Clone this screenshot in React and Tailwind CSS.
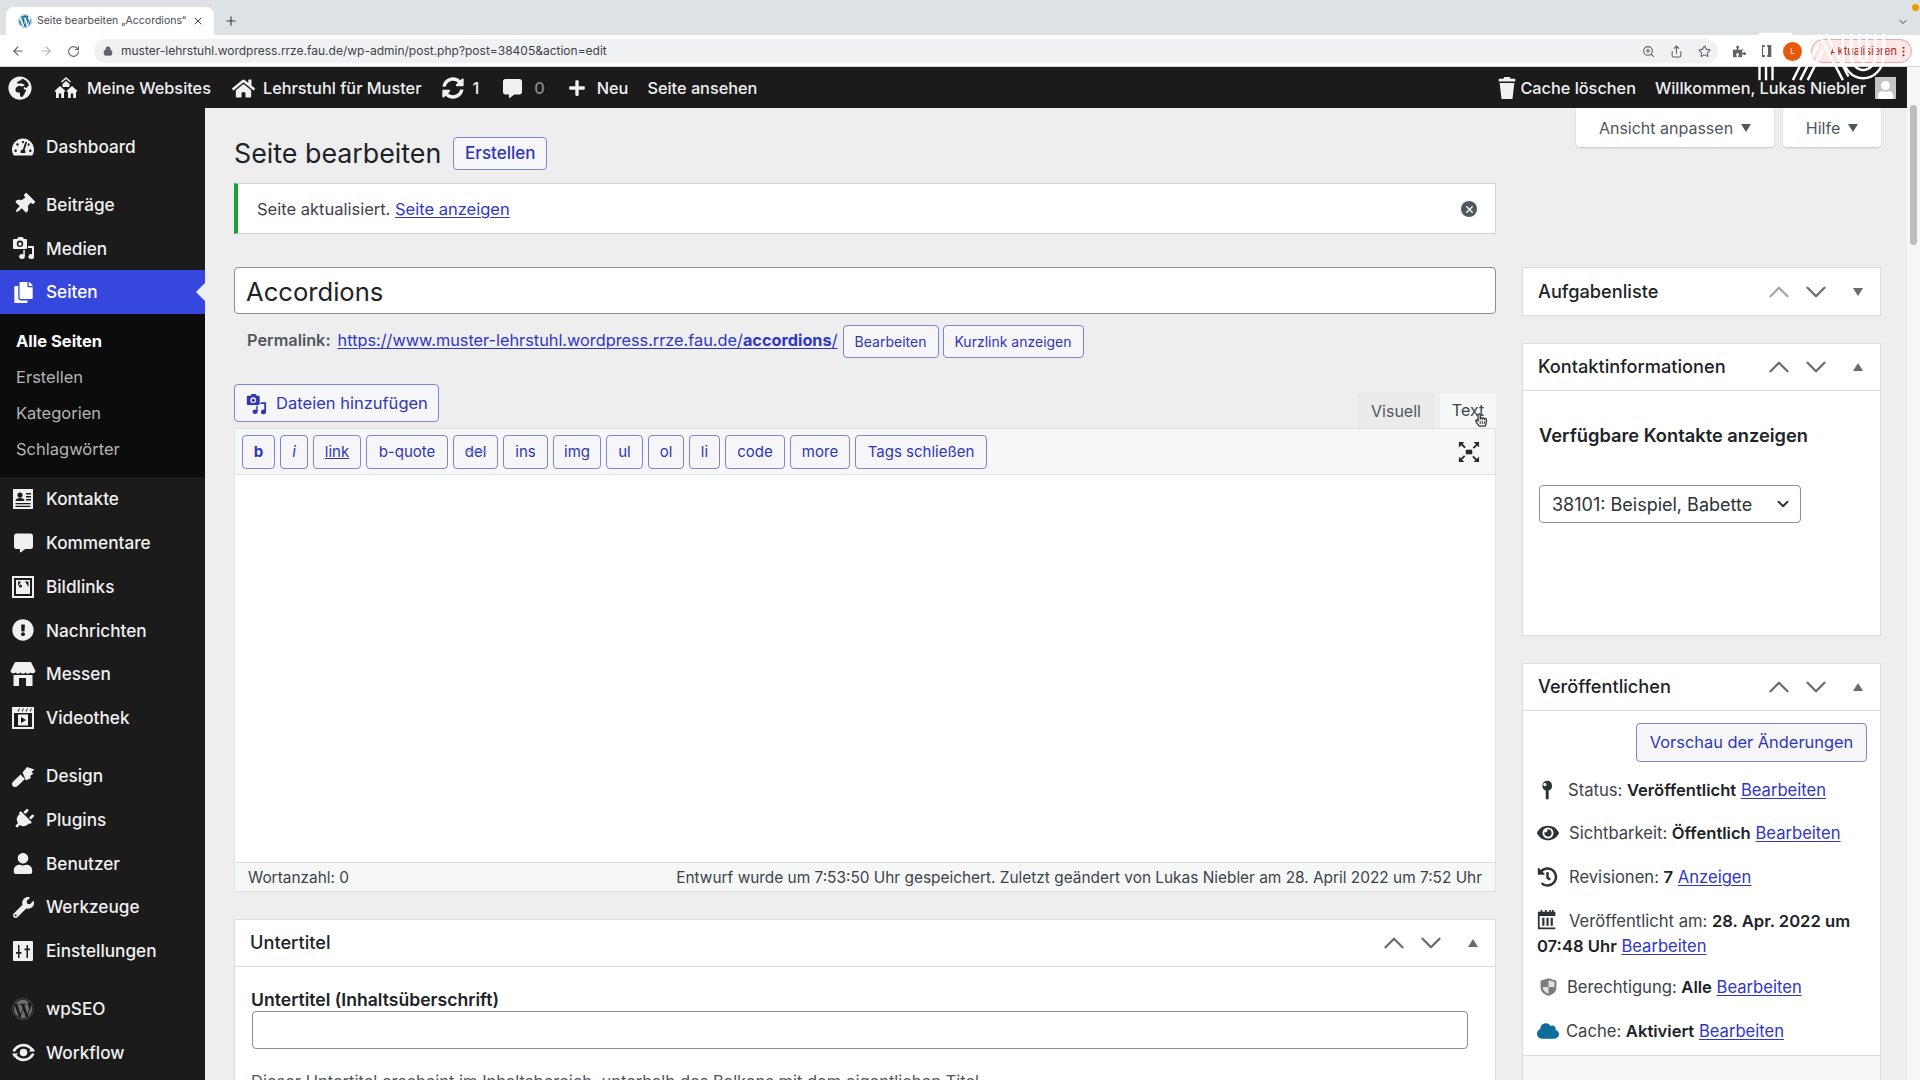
import React from "react";
import { ArrowLeft, ArrowRight, RotateCw, Lock, ZoomIn, Share, Star, ChevronDown, ChevronUp, X, Plus, EllipsisVertical } from "lucide-react";
import { FaTachometerAlt, FaThumbtack, FaCopy, FaCommentAlt, FaExclamationCircle, FaPlug, FaUser, FaWrench, FaWordpress, FaGlobeAfrica, FaHome, FaSyncAlt, FaPlus, FaEye, FaHistory, FaCloud, FaPuzzlePiece, FaRegHandPointer } from "react-icons/fa";

const MediaIcon = ({ className = "" }) => (
  <svg viewBox="0 0 24 24" className={className} fill="currentColor">
    <path d="M3 3h3l1.500-2h4L13 3h2a1 1 0 0 1 1 1v8a1 1 0 0 1-1 1H3a1 1 0 0 1-1-1V4a1 1 0 0 1 1-1zm6 8a3.200 3.200 0 1 0 0-6.400 3.200 3.200 0 0 0 0 6.400z" />
    <circle cx="9" cy="8" r="1.700" />
    <path d="M17 10h6v10.500a2.800 2.500 0 1 1-2-2.300V12h-4z" />
    <ellipse cx="11" cy="20.500" rx="2.800" ry="2.500" />
    <rect x="12.300" y="14" width="1.500" height="6" />
  </svg>
);
const MultisiteIcon = ({ className = "" }) => (
  <svg viewBox="0 0 24 24" className={className} fill="currentColor">
    <path d="M12 1l5 4.500-1 1-4-3.500-4 3.500-1-1z" />
    <path d="M12 5l3.500 3v3h-7V8z" />
    <path d="M6 10l5.500 5-1 1-.5-.4V22H2v-6.400l-.5.4-1-1zM18 10l5.500 5-1 1-.5-.4V22h-8v-6.400l-.5.4-1-1z" />
    <rect x="4.800" y="17.500" width="2.400" height="4.500" fill="#1b1b1b" />
    <rect x="16.800" y="17.500" width="2.400" height="4.500" fill="#1b1b1b" />
  </svg>
);
const ContactIcon = ({ className = "" }) => (
  <svg viewBox="0 0 24 24" className={className} fill="currentColor">
    <path fillRule="evenodd" d="M2 2h20v20H2zM9 5.500a2.600 2.600 0 1 0 0 5.200 2.600 2.600 0 0 0 0-5.200zM4.500 14h9c0-2-2-3-4.500-3s-4.500 1-4.500 3zM15 6v1.500h5V6zm0 3v1.500h5V9zm0 3v1.500h5V12zM4.500 16v1.300h15V16zm0 2.700V20h15v-1.300z" />
  </svg>
);
const ImageIcon = ({ className = "" }) => (
  <svg viewBox="0 0 24 24" className={className} fill="currentColor">
    <path fillRule="evenodd" d="M1 1h22v22H1zM3 3v18h18V3z" />
    <path d="M5 5h14v14H5z" />
    <path d="M7 6.500h3L7 11zM14 6.500h3.500V12zM9.500 12.500a1.500 1.500 0 1 0 0-3 1.500 1.500 0 0 0 0 3z" fill="#1b1b1b" />
  </svg>
);
const StoreIcon = ({ className = "" }) => (
  <svg viewBox="0 0 26 26" className={className} fill="currentColor">
    <path d="M5 1h16l4.500 9a3 3 0 0 1-5 1.500 3.500 3.500 0 0 1-5 0 3.500 3.500 0 0 1-5 0 3.500 3.500 0 0 1-5 0 3 3 0 0 1-5-1.500z" />
    <path fillRule="evenodd" d="M3.500 14h19v11h-19zM9 17v8h7v-8z" />
  </svg>
);
const VideoIcon = ({ className = "" }) => (
  <svg viewBox="0 0 24 24" className={className} fill="currentColor">
    <path fillRule="evenodd" d="M1 1h22v22H1zM3 7v14h18V7zM8 2.500L6.500 5.500h1L9 2.500zm4 0l-1.500 3h1l1.500-3zm4 0l-1.500 3h1l1.500-3zm4 0l-1.500 3h1l1.500-3z" />
    <path d="M7 8.500h10v11H7zM10 11v6l5-3z" fillRule="evenodd" />
  </svg>
);
const BrushIcon = ({ className = "" }) => (
  <svg viewBox="0 0 24 24" className={className} fill="currentColor">
    <path d="M11.500 8.500L16 3l7.500 2.500-3 2.500 2 1.500-3.500 2.500 1 2-5 2.500z" />
    <path d="M4 23a3 3 0 0 1-3-3c0-1 .5-1.700 1-2.200l7.500-7.300 4.500 4.500-7.300 7c-.7.700-1.600 1-2.700 1z" />
  </svg>
);
const SettingsIcon = ({ className = "" }) => (
  <svg viewBox="0 0 24 24" className={className} fill="currentColor">
    <path fillRule="evenodd" d="M3 2h18a1 1 0 0 1 1 1v18a1 1 0 0 1-1 1H3a1 1 0 0 1-1-1V3a1 1 0 0 1 1-1zM7 6v7H5v1.800h2V19h1.500v-4.200h2V13h-2V6zm8.500 0v3.500h-2v1.800h2V19H17v-7.700h2V9.500h-2V6z" />
  </svg>
);
const WorkflowIcon = ({ className = "" }) => (
  <svg viewBox="0 0 24 24" className={className} fill="none" stroke="currentColor">
    <circle cx="12" cy="12" r="3.600" fill="currentColor" stroke="none" />
    <path strokeWidth="2.600" d="M2.500 11C5 6.500 8.500 5 12 5c3.500 0 6 1.500 8 4M21.500 13C19 17.500 15.500 19 12 19c-3.500 0-6-1.500-8-4" />
    <path d="M23 11h-6l4-3.500zM1 13h6l-4 3.500z" fill="currentColor" stroke="none" />
  </svg>
);
const PinIcon = ({ className = "" }) => (
  <svg viewBox="0 0 16 24" className={className} fill="currentColor">
    <path fillRule="evenodd" d="M8 1a6 6 0 0 1 2 11.660V23H6.500V12.660A6 6 0 0 1 8 1zM5.500 3.500a2 2 0 1 0 .01 0z" />
  </svg>
);
const CalendarIcon = ({ className = "" }) => (
  <svg viewBox="0 0 24 24" className={className} fill="currentColor">
    <path fillRule="evenodd" d="M1 3h3V1h2v2h3V1h2v2h3V1h2v2h1V1h2v2h2v20H1zM3 8v13h18V8z" />
    <path d="M6 10h2.500v9H6zm4.800 0h2.500v9h-2.500zm4.800 0h2.500v9h-2.500z" />
  </svg>
);
const ShieldIcon = ({ className = "" }) => (
  <svg viewBox="0 0 24 24" className={className}>
    <path d="M12 1l10 3v8c0 6-4 9.500-10 11C6 21.500 2 18 2 12V4z" fill="#7d7d7d" />
    <path d="M12 3.500l7.500 2.300V12H12zM12 12v8.500C8 19 5 16.500 4.500 12z" fill="#e2e2e2" />
  </svg>
);
const FullscreenIcon = ({ className = "" }) => (
  <svg viewBox="0 0 24 24" className={className} fill="#2a2a2a">
    <rect x="8.500" y="9.500" width="7" height="5" />
    <path d="M1 1h6L5 3l3.500 3.500-1.500 1.500L3.500 4.500 1 7zM23 1v6l-2-2-3.500 3.500L16 7l3.500-3.500L17 1zM1 23v-6l2 2 3.500-3.500L8 17l-3.500 3.500L7 23zM23 23h-6l2-2-3.500-3.500L17 16l3.500 3.500L23 17z" />
  </svg>
);
const FauLogo = ({ className = "" }) => (
  <svg viewBox="0 0 140 54" className={className} fill="none" stroke="#ffffff" strokeWidth="2.600">
    <path d="M2 52V2M9 52V2M16 52V2M2 2h35M2 8h35" />
    <path d="M38 52L62 4M46 52L66 12M54 52L70 20M66 2L92 52M74 2L98 48" />
    <path d="M92 2V26a22 24 0 0 0 44 0V2M101 2V26a13 15 0 0 0 26 0V2M110 2V26a4 6 0 0 0 8 0V2" />
  </svg>
);

const Menu = [
  { t: "Dashboard", I: FaTachometerAlt, s: "w-[22px] h-[22px]", gap: true },
  { t: "Beiträge", I: FaThumbtack, s: "w-[21px] h-[21px] rotate-45" },
  { t: "Medien", I: MediaIcon, s: "w-[24px] h-[24px]" },
];
const Menu2 = [
  { t: "Kontakte", I: ContactIcon, s: "w-[24px] h-[24px]" },
  { t: "Kommentare", I: FaCommentAlt, s: "w-[19px] h-[20px]" },
  { t: "Bildlinks", I: ImageIcon, s: "w-[24px] h-[24px]" },
  { t: "Nachrichten", I: FaExclamationCircle, s: "w-[22px] h-[22px]" },
  { t: "Messen", I: StoreIcon, s: "w-[26px] h-[26px]" },
  { t: "Videothek", I: VideoIcon, s: "w-[24px] h-[24px]", gap: true },
  { t: "Design", I: BrushIcon, s: "w-[24px] h-[24px]" },
  { t: "Plugins", I: FaPlug, s: "w-[21px] h-[21px] rotate-45" },
  { t: "Benutzer", I: FaUser, s: "w-[20px] h-[21px]" },
  { t: "Werkzeuge", I: FaWrench, s: "w-[21px] h-[21px]" },
  { t: "Einstellungen", I: SettingsIcon, s: "w-[24px] h-[24px]", gap: true },
  { t: "wpSEO", I: FaWordpress, s: "w-[22px] h-[22px] text-[#6e6e6e]" },
  { t: "Workflow", I: WorkflowIcon, s: "w-[25px] h-[25px]" },
];

const MenuRow = ({ t, I, s, gap }) => (
  <div className={`flex h-[43.800px] items-center pl-[10px] text-[17.200px] font-medium text-[#f0f0f1] ${gap ? "mb-[14px]" : ""}`}>
    <span className="flex w-[26px] items-center justify-center"><I className={s} /></span>
    <span className="ml-[10px]">{t}</span>
  </div>
);

const btn = "flex items-center justify-center rounded-[4px] border border-[#7f84d4] bg-[#f6f6f9] text-[#2f37b5]";
const link = "text-[#2f37c4] underline decoration-1 underline-offset-2";

const Arrows = ({ upClass = "" }) => (
  <>
    <span className="flex w-[36px] justify-center"><ChevronUp className={`h-[34px] w-[34px] shrink-0 ${upClass}`} strokeWidth={1.600} /></span>
    <span className="flex w-[38px] justify-center"><ChevronDown className="h-[34px] w-[34px] shrink-0" strokeWidth={1.600} /></span>
  </>
);

const CardHead = ({ title, closed }) => (
  <div className={`flex h-[47px] items-center justify-between pl-[15px] ${closed ? "" : "border-b border-[#dcdcde]"}`}>
    <span className="text-[18.200px] font-medium text-[#1d2327]">{title}</span>
    <div className="flex items-center text-[#6b6b6b]">
      <Arrows upClass={closed ? "text-[#a5a5a5]" : ""} />
      <span className="flex w-[45px] justify-center">
        {closed
          ? <span className="h-0 w-0 border-x-[5px] border-t-[8px] border-x-transparent border-t-[#6b6b6b]" />
          : <span className="h-0 w-0 border-x-[5px] border-b-[8px] border-x-transparent border-b-[#6b6b6b]" />}
      </span>
    </div>
  </div>
);

const tools = [
  ["b", "w-[33px] font-bold"], ["i", "w-[28px] italic"], ["link", "w-[48px] underline"], ["b-quote", "w-[82px]"],
  ["del", "w-[45px] line-through decoration-[#9aa0dd]"], ["ins", "w-[45px]"], ["img", "w-[48px]"], ["ul", "w-[37px]"], ["ol", "w-[36px]"],
  ["li", "w-[31px]"], ["code", "w-[60px]"], ["more", "w-[60px]"], ["Tags schließen", "w-[132px]"],
];

const PubRow = ({ icon, children, className = "" }) => (
  <div className={`flex items-center text-[16.600px] text-[#3c434a] ${className}`}>{icon}<span>{children}</span></div>
);

export default function App() {
  return (
    <div className="relative flex h-[1080px] w-[1920px] flex-col overflow-hidden bg-white font-['Inter',sans-serif]">
      {/* browser tabs */}
      <div className="relative flex h-[35px] items-end bg-[#dee1e6] pl-[6px]">
        <div className="flex h-[28px] w-[208px] items-center rounded-t-[8px] bg-white pl-[12px] pr-[10px]">
          <FaWordpress className="h-[14px] w-[14px] text-[#21759b]" />
          <span className="ml-[5px] flex-1 whitespace-nowrap text-[10.500px] text-[#45494f]">Seite bearbeiten „Accordions“</span>
          <X className="h-[12px] w-[12px] text-[#3c4043]" />
        </div>
        <Plus className="mb-[7px] ml-[10px] h-[14px] w-[14px] text-[#3c4043]" />
        <div className="mb-[7px] ml-auto mr-[11px] text-[#3c4043]"><ChevronDown className="h-[12px] w-[12px]" /></div>
        <span className="absolute right-[1px] top-[4px] h-[7px] w-[7px] rounded-full bg-[#f29900]" />
      </div>
      {/* address bar */}
      <div className="flex h-[32px] items-center border-b border-[#d4d4d4] pl-[11px] pr-[8px] pt-[1px]">
        <ArrowLeft className="h-[14px] w-[14px] text-[#5f6368]" />
        <ArrowRight className="ml-[14px] h-[14px] w-[14px] text-[#b0b3b8]" />
        <RotateCw className="ml-[14px] h-[13px] w-[13px] text-[#5f6368]" />
        <div className="ml-[14px] flex h-[24px] w-[1624px] items-center rounded-full bg-[#eff1f3] pl-[9px] pr-[7px]">
          <Lock className="h-[10px] w-[10px] text-[#5f6368]" fill="#5f6368" />
          <span className="ml-[8px] text-[12px] text-[#3f4246]">muster-lehrstuhl.wordpress.rrze.fau.de/wp-admin/post.php?post=38405&amp;action=edit</span>
          <span className="ml-auto flex items-center gap-[15px] text-[#5f6368]">
            <ZoomIn className="h-[13px] w-[13px]" />
            <Share className="h-[13px] w-[13px]" />
            <Star className="h-[13px] w-[13px]" />
          </span>
        </div>
        <FaPuzzlePiece className="ml-[15px] h-[13px] w-[13px] text-[#5f6368]" />
        <span className="ml-[16px] h-[12px] w-[11px] border-y-2 border-l border-r-[5px] border-[#5f6368]" />
        <span className="ml-[10px] flex h-[19px] w-[19px] items-center justify-center rounded-full bg-[#e8590c] text-[8px] text-white">L</span>
        <div className="ml-[9px] flex h-[24px] w-[101px] items-center justify-between rounded-full border border-[#e8a9a9] bg-[#fce8e6] pl-[18px] pr-[8px] text-[11px] text-[#b3261e]">
          <span>Aktualisieren</span><EllipsisVertical className="h-[13px] w-[13px] shrink-0 text-[#b3261e]" />
        </div>
      </div>
      <FauLogo className="absolute left-[1755px] top-[32px] h-[50px] w-[135px]" />
      {/* page */}
      <div className="flex min-h-0 flex-1">
        <div className="flex w-[1907px] flex-col">
          {/* admin bar */}
          <div className="flex h-[41px] shrink-0 items-center bg-[#1b1b1b] pl-[8px] pr-[11px] pt-[1px] text-[16.300px] font-medium text-[#f0f0f1]">
            <FaGlobeAfrica className="h-[24px] w-[24px]" />
            <MultisiteIcon className="ml-[22px] h-[24px] w-[24px]" />
            <span className="ml-[9px] pt-[1px]">Meine Websites</span>
            <FaHome className="ml-[21px] h-[23px] w-[23px]" />
            <span className="ml-[8px] pt-[1px]">Lehrstuhl für Muster</span>
            <FaSyncAlt className="ml-[21px] h-[22px] w-[22px]" />
            <span className="ml-[8px] pt-[1px]">1</span>
            <FaCommentAlt className="ml-[24px] h-[19px] w-[19px]" />
            <span className="ml-[12px] pt-[1px] text-[#8a8a8a]">0</span>
            <FaPlus className="ml-[23px] h-[18px] w-[18px]" />
            <span className="ml-[11px] pt-[1px]">Neu</span>
            <span className="ml-[19px] pt-[1px]">Seite ansehen</span>
            <span className="ml-auto flex items-center">
              <svg viewBox="0 0 18 24" className="h-[22px] w-[18px]" fill="currentColor"><path d="M6 0h6l1 2h5v3H0V2h5zM1 6.500h16L15 24H3z" /></svg>
              <span className="ml-[4px] pt-[1px]">Cache löschen</span>
              <span className="ml-[19px] pt-[1px]">Willkommen, Lukas Niebler</span>
              <span className="ml-[9px] flex h-[22px] w-[21px] items-end justify-center overflow-hidden bg-[#c4c4c4]">
                <FaUser className="h-[18px] w-[17px] text-white" />
              </span>
            </span>
          </div>
          <div className="flex min-h-0 flex-1">
            {/* sidebar */}
            <div className="w-[205px] shrink-0 bg-[#1b1b1b] pt-[17px]">
              <MenuRow {...Menu[0]} />
              <MenuRow {...Menu[1]} />
              <MenuRow {...Menu[2]} />
              <div className="relative flex h-[43.800px] items-center bg-[#3547dc] pl-[10px] text-[17.200px] font-medium text-white">
                <span className="flex w-[26px] justify-center"><FaCopy className="h-[21px] w-[21px]" /></span>
                <span className="ml-[10px]">Seiten</span>
                <span className="absolute right-0 top-[13px] h-0 w-0 border-y-[9px] border-r-[9px] border-y-transparent border-r-[#eeeeee]" />
              </div>
              <div className="bg-[#0c0c0d] pb-[10px] pt-[9px] text-[16.500px] text-[#b4b4b4]">
                <div className="flex h-[36px] items-center pl-[16px] font-bold text-white">Alle Seiten</div>
                <div className="flex h-[36px] items-center pl-[16px]">Erstellen</div>
                <div className="flex h-[36px] items-center pl-[16px]">Kategorien</div>
                <div className="flex h-[36px] items-center pl-[16px]">Schlagwörter</div>
              </div>
              {Menu2.map((m) => <MenuRow key={m.t} {...m} />)}
            </div>
            {/* content */}
            <div className="flex flex-1 items-start gap-[26px] overflow-hidden bg-[#eeeeee] pl-[29px]">
              <div className="w-[1262px] shrink-0">
                <div className="flex items-center pt-[29px]">
                  <h1 className="text-[26.800px] leading-[31px] text-[#1d2327]">Seite bearbeiten</h1>
                  <span className={`${btn} ml-[12px] h-[33px] w-[94px] text-[17px] font-medium`}>Erstellen</span>
                </div>
                <div className="mt-[13px] flex h-[51px] items-center justify-between border border-l-[4px] border-[#d4d4d8] border-l-[#11a632] bg-white pl-[19px] pr-[18px] pt-[1px] text-[16.500px] text-[#3c434a]">
                  <span>Seite aktualisiert. <span className={link}>Seite anzeigen</span></span>
                  <span className="flex h-[16px] w-[16px] items-center justify-center rounded-full bg-[#50575e]"><X className="h-[11px] w-[11px] text-white" strokeWidth={3} /></span>
                </div>
                <input readOnly value="Accordions" className="mt-[33px] block h-[47px] w-full rounded-[4px] border border-[#8c8f94] bg-white px-[11px] pt-[2px] text-[25.600px] text-[#1d2327]" />
                <div className="mt-[11px] flex h-[33px] items-center pl-[13px] text-[16.300px]">
                  <span className="mb-[3px] font-semibold text-[#50575e]">Permalink:</span>
                  <span className={`${link} mb-[3px] ml-[7px]`}>https://www.muster-lehrstuhl.wordpress.rrze.fau.de/<b>accordions</b>/</span>
                  <span className={`${btn} ml-[5px] h-[33px] w-[96px] text-[14px]`}>Bearbeiten</span>
                  <span className={`${btn} ml-[4px] h-[33px] w-[141px] text-[14px]`}>Kurzlink anzeigen</span>
                </div>
                <div className="mt-[26px] flex h-[44px] items-start justify-between">
                  <span className={`${btn} h-[38px] w-[205px] gap-[9px] pt-[1px] text-[16.500px]`}>
                    <MediaIcon className="h-[22px] w-[22px] text-[#2f37b5]" />
                    Dateien hinzufügen
                  </span>
                  <div className="flex items-end self-end text-[16px] text-[#50575e]">
                    <span className="flex h-[35px] w-[74px] items-center justify-center border border-b-0 border-[#e4e4e4] bg-[#ebebeb]">Visuell</span>
                    <span className="relative ml-[7px] flex h-[35px] w-[56px] items-center justify-center bg-[#f6f7f7] pb-[2px] text-[#3c434a]">
                      Text
                      <FaRegHandPointer className="absolute right-[9px] top-[20px] h-[14px] w-[12px] text-[#333333]" />
                    </span>
                  </div>
                </div>
                <div className="border-x border-[#e2e2e2] bg-white">
                  <div className="flex h-[47px] items-center gap-[5px] border-y border-[#dfdfdf] bg-[#f6f7f7] pl-[7px] pr-[15px] pt-[1px]">
                    {tools.map(([t, c]) => (
                      <span key={t} className={`${btn} h-[34px] text-[15px] ${c}`}>{t}</span>
                    ))}
                    <FullscreenIcon className="ml-auto h-[22px] w-[22px]" />
                  </div>
                  <div className="h-[387px]" />
                  <div className="flex h-[30px] items-center justify-between border-y border-[#dcdcde] bg-[#f6f7f7] px-[13px] pt-[1px] text-[15.400px] text-[#3c434a]">
                    <span>Wortanzahl: 0</span>
                    <span>Entwurf wurde um 7:53:50 Uhr gespeichert. Zuletzt geändert von Lukas Niebler am 28. April 2022 um 7:52 Uhr</span>
                  </div>
                </div>
                <div className="mt-[27px] border border-[#dcdcde] bg-white">
                  <CardHead title="Untertitel" />
                  <div className="px-[16px] pt-[21px]">
                    <div className="text-[17.600px] font-semibold leading-[23px] text-[#1d2327]">Untertitel (Inhaltsüberschrift)</div>
                    <input readOnly className="ml-[1px] block h-[38px] w-[1216px] rounded-[4px] border border-[#8c8f94] bg-white" />
                    <p className="mt-[20px] text-[16.500px] text-[#50575e]">Dieser Untertitel erscheint im Inhaltsbereich, unterhalb des Balkens mit dem eigentlichen Titel.</p>
                  </div>
                </div>
              </div>
              {/* right column */}
              <div className="w-[359px] shrink-0">
                <div className="flex justify-end gap-[9px] text-[16px] text-[#50575e]">
                  <span className="flex h-[39px] w-[198px] items-center justify-center gap-[8px] rounded-b-[4px] bg-white shadow-[0_1px_2px_rgba(0,0,0,0.15)]">
                    Ansicht anpassen <span className="h-0 w-0 border-x-[5px] border-t-[8px] border-x-transparent border-t-[#50575e]" />
                  </span>
                  <span className="flex h-[39px] w-[98px] items-center justify-center gap-[8px] rounded-b-[4px] bg-white shadow-[0_1px_2px_rgba(0,0,0,0.15)]">
                    Hilfe <span className="h-0 w-0 border-x-[5px] border-t-[8px] border-x-transparent border-t-[#50575e]" />
                  </span>
                </div>
                <div className="mt-[120px] border border-[#dcdcde] bg-white"><CardHead title="Aufgabenliste" closed /></div>
                <div className="mt-[27px] border border-[#dcdcde] bg-white">
                  <CardHead title="Kontaktinformationen" />
                  <div className="h-[244px] px-[16px] pt-[32px]">
                    <div className="text-[18.300px] font-semibold leading-[24px] text-[#1d2327]">Verfügbare Kontakte anzeigen</div>
                    <div className="mt-[38px] flex h-[38px] w-[262px] items-center justify-between rounded-[4px] border border-[#8c8f94] pl-[12px] pr-[8px] text-[18px] text-[#2c3338]">
                      38101: Beispiel, Babette
                      <ChevronDown className="h-[18px] w-[18px]" strokeWidth={2.500} />
                    </div>
                  </div>
                </div>
                <div className="mt-[27px] border border-[#dcdcde] bg-white">
                  <CardHead title="Veröffentlichen" />
                  <div className="pl-[14px] pr-[13px] pt-[12px]">
                    <div className="flex justify-end">
                      <span className={`${btn} h-[39px] w-[231px] text-[16.400px]`}>Vorschau der Änderungen</span>
                    </div>
                    <PubRow className="mt-[13px] h-[30px]" icon={<PinIcon className="ml-[3px] mr-[14px] h-[20px] w-[14px] text-[#2c3338]" />}>
                      Status: <b className="font-semibold text-[#1d2327]">Veröffentlicht</b> <span className={link}>Bearbeiten</span>
                    </PubRow>
                    <PubRow className="mt-[13px] h-[30px]" icon={<FaEye className="mr-[10px] h-[20px] w-[22px] text-[#2c3338]" />}>
                      Sichtbarkeit: <b className="font-semibold text-[#1d2327]">Öffentlich</b> <span className={link}>Bearbeiten</span>
                    </PubRow>
                    <PubRow className="mt-[14px] h-[30px]" icon={<FaHistory className="mr-[11px] h-[20px] w-[21px] text-[#2c3338]" />}>
                      Revisionen: <b className="font-semibold text-[#1d2327]">7</b> <span className={link}>Anzeigen</span>
                    </PubRow>
                    <div className="mt-[17px] text-[16.600px] leading-[25px] text-[#3c434a]">
                      <CalendarIcon className="mr-[11px] inline-block h-[21px] w-[21px] align-[-3px] text-[#2c3338]" />
                      Veröffentlicht am: <b className="font-semibold text-[#1d2327]">28. Apr. 2022 um</b><br />
                      <b className="font-semibold text-[#1d2327]">07:48 Uhr</b> <span className={link}>Bearbeiten</span>
                    </div>
                    <PubRow className="mt-[13px] h-[30px]" icon={<ShieldIcon className="ml-[2px] mr-[9px] h-[20px] w-[19px]" />}>
                      Berechtigung: <b className="font-semibold text-[#1d2327]">Alle</b> <span className={link}>Bearbeiten</span>
                    </PubRow>
                    <PubRow className="mt-[14px] h-[30px]" icon={<FaCloud className="mr-[7px] h-[20px] w-[22px] text-[#0f6c9c]" />}>
                      Cache: <b className="font-semibold text-[#1d2327]">Aktiviert</b> <span className={link}>Bearbeiten</span>
                    </PubRow>
                  </div>
                  <div className="mt-[9px] h-[60px] border-t border-[#dcdcde] bg-[#f6f7f7]" />
                </div>
              </div>
            </div>
          </div>
        </div>
        {/* scrollbar */}
        <div className="flex-1 bg-[#f6f6f6] pl-[3px] pt-[38px]">
          <div className="h-[140px] w-[7px] rounded-full bg-[#bdbdbd]" />
        </div>
      </div>
    </div>
  );
}
